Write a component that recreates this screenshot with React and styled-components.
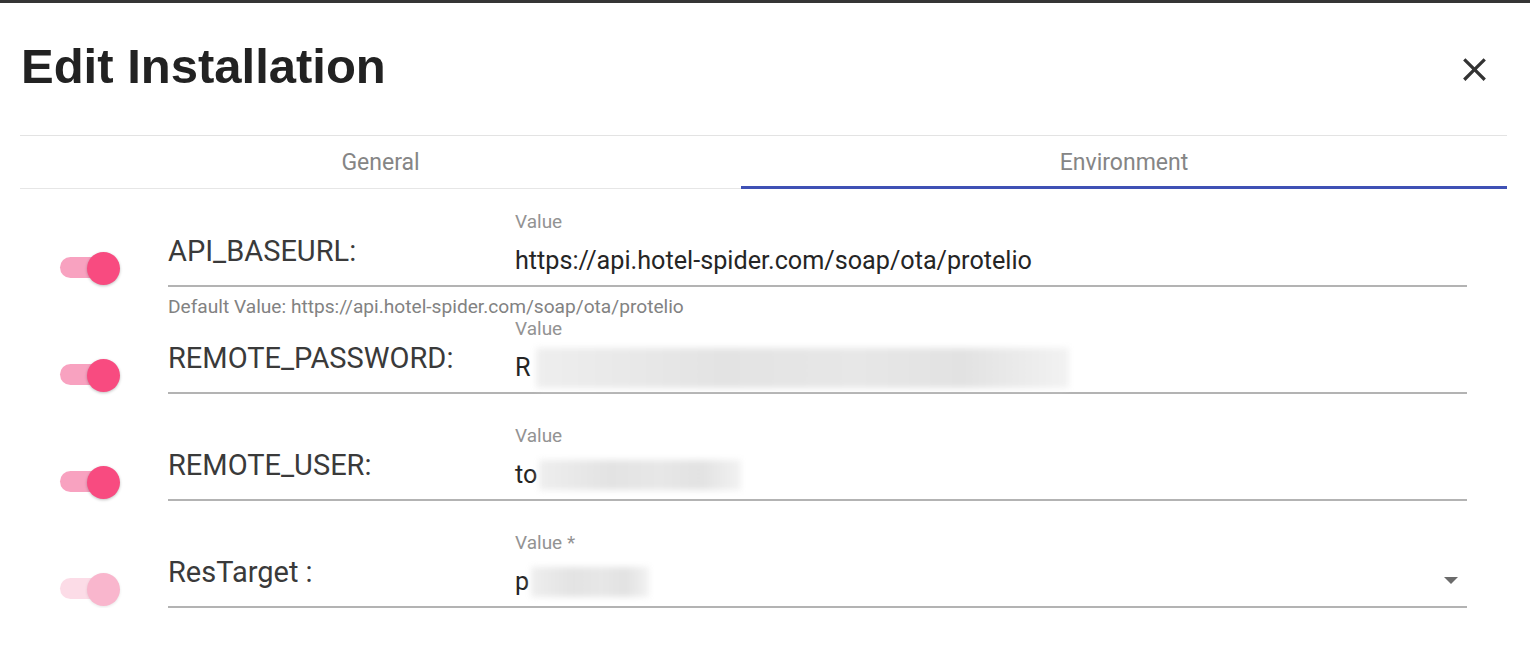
import React from "react";
import styled, { createGlobalStyle } from "styled-components";

const GlobalStyle = createGlobalStyle`
  html, body { margin: 0; padding: 0; background: #ffffff; }
  body { font-family: Roboto, "Liberation Sans", Arial, sans-serif; }
`;

const TopBar = styled.div`
  height: 3px;
  background: #353535;
`;

const Dialog = styled.div`
  padding: 0 23px 0 20px;
`;

const Header = styled.header`
  height: 132px;
  display: flex;
  align-items: center;
  justify-content: space-between;
`;

const Title = styled.h1`
  margin: 0 0 6px 1px;
  font-family: "Liberation Sans", Arial, sans-serif;
  font-weight: 700;
  font-size: 49px;
  line-height: 56px;
  color: #222222;
`;

const CloseButton = styled.button`
  width: 40px;
  height: 40px;
  margin-right: 13px;
  padding: 0;
  border: 0;
  background: transparent;
  display: flex;
  align-items: center;
  justify-content: center;
  color: #333333;
  cursor: pointer;
`;

const TabBar = styled.nav`
  display: grid;
  grid-template-columns: 721px 1fr;
  border-top: 1px solid #e3e3e3;
`;

const Tab = styled.div`
  height: 53px;
  box-sizing: border-box;
  display: flex;
  align-items: center;
  justify-content: center;
  font-size: 23px;
  color: #858585;
  border-bottom: ${(p) => (p.$active ? "3px solid #3f51b5" : "1px solid #e6e6e6")};
  padding-top: ${(p) => (p.$active ? "2px" : "0")};
`;

const Rows = styled.div`
  display: flex;
  flex-direction: column;
  gap: 31px;
  padding: 22px 40px 0 0;
`;

const Row = styled.div`
  display: flex;
`;

const SwitchCell = styled.div`
  width: 148px;
  flex: none;
  padding: 40px 0 0 40px;
  box-sizing: border-box;
`;

const SwitchBox = styled.div`
  position: relative;
  width: 60px;
  height: 33px;
`;

const Track = styled.div`
  position: absolute;
  left: 0;
  top: 6px;
  width: 53px;
  height: 21px;
  border-radius: 11px;
  background: ${(p) => (p.$disabled ? "#fcdce7" : "#f8a2c0")};
`;

const Thumb = styled.div`
  position: absolute;
  left: 27px;
  top: 1px;
  width: 33px;
  height: 33px;
  border-radius: 50%;
  background: ${(p) => (p.$disabled ? "#f9b6cd" : "#f84b80")};
  box-shadow: 0 1px 3px rgba(0, 0, 0, ${(p) => (p.$disabled ? 0.1 : 0.25)});
`;

const Field = styled.div`
  position: relative;
  flex: 1;
  display: grid;
  grid-template-columns: 347px 1fr;
  height: 76px;
  box-sizing: border-box;
  border-bottom: 2px solid #b3b3b3;
`;

const Label = styled.div`
  padding-top: 23px;
  font-size: 29px;
  line-height: 34px;
  color: #3a3a3a;
`;

const ValueCol = styled.div`
  display: flex;
  flex-direction: column;
`;

const SmallLabel = styled.div`
  font-size: 19px;
  line-height: 22px;
  color: #939393;
`;

const InputLine = styled.div`
  margin-top: 13px;
  height: 30px;
  display: flex;
  align-items: center;
  font-size: 25.2px;
  line-height: 30px;
  color: #252525;
  white-space: nowrap;
`;

const Blurred = styled.span`
  display: inline-block;
  height: ${(p) => p.$h || 36}px;
  margin-left: ${(p) => p.$gap || 6}px;
  background: linear-gradient(90deg, #eeeeee 0%, #e3e3e3 35%, #e7e7e7 60%, #e2e2e2 80%, #f2f2f2 100%);
  filter: blur(3px);
`;

const Arrow = styled.svg`
  margin-left: auto;
  margin-right: 9px;
  margin-top: -3px;
  flex: none;
`;

const Helper = styled.div`
  position: absolute;
  left: 0;
  top: calc(100% + 11px);
  font-size: 19.15px;
  line-height: 22px;
  color: #828282;
  white-space: nowrap;
`;

function Switch({ disabled }) {
  return (
    <SwitchBox>
      <Track $disabled={disabled} />
      <Thumb $disabled={disabled} />
    </SwitchBox>
  );
}

const rows = [
  {
    name: "API_BASEURL:",
    label: "Value",
    value: "https://api.hotel-spider.com/soap/ota/protelio",
    helper: "Default Value: https://api.hotel-spider.com/soap/ota/protelio",
  },
  { name: "REMOTE_PASSWORD:", label: "Value", value: "R", blur: 533, blurH: 40, gap: 5 },
  { name: "REMOTE_USER:", label: "Value", value: "to", blur: 202, blurH: 30, gap: 2 },
  { name: "ResTarget :", label: "Value *", value: "p", blur: 118, blurH: 30, gap: 2, select: true, disabled: true },
];

export default function App() {
  return (
    <>
      <GlobalStyle />
      <TopBar />
      <Dialog>
        <Header>
          <Title>Edit Installation</Title>
          <CloseButton aria-label="close">
            <svg width="39" height="39" viewBox="0 0 24 24" fill="currentColor">
              <path d="M19 6.41L17.59 5 12 10.59 6.41 5 5 6.41 10.59 12 5 17.59 6.41 19 12 13.41 17.59 19 19 17.59 13.41 12z" />
            </svg>
          </CloseButton>
        </Header>
        <TabBar>
          <Tab>General</Tab>
          <Tab $active>Environment</Tab>
        </TabBar>
        <Rows>
          {rows.map((r) => (
            <Row key={r.name}>
              <SwitchCell>
                <Switch disabled={r.disabled} />
              </SwitchCell>
              <Field>
                <Label>{r.name}</Label>
                <ValueCol>
                  <SmallLabel>{r.label}</SmallLabel>
                  <InputLine>
                    {r.value}
                    {r.blur ? <Blurred style={{ width: r.blur }} $h={r.blurH} $gap={r.gap} /> : null}
                    {r.select ? (
                      <Arrow width="14" height="8" viewBox="0 0 14 8">
                        <path d="M0 0 L14 0 L7 7 Z" fill="#6b6b6b" />
                      </Arrow>
                    ) : null}
                  </InputLine>
                </ValueCol>
                {r.helper ? <Helper>{r.helper}</Helper> : null}
              </Field>
            </Row>
          ))}
        </Rows>
      </Dialog>
    </>
  );
}
